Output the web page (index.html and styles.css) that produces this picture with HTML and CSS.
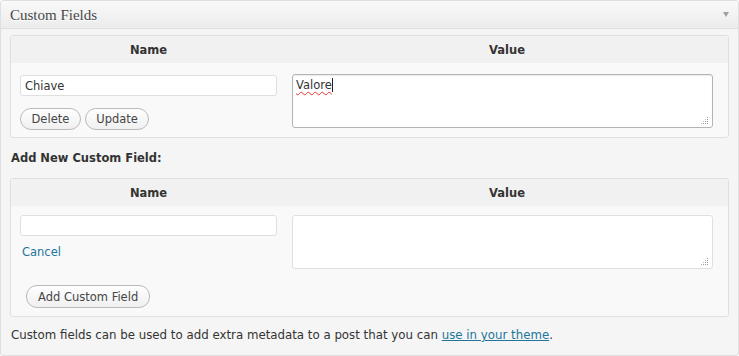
FILE: index.html
```html
<!DOCTYPE html>
<html lang="en">
<head>
    <meta charset="UTF-8">
    <title>Custom Fields</title>
    <link rel="stylesheet" href="styles.css">
</head>
<body>

    <!-- Custom fields meta box -->
    <div class="postbox">
        <div class="postbox-head">
            <h3>Custom Fields</h3>
            <span class="toggle"></span>
        </div>

        <div class="inside">
            <!-- Existing fields -->
            <table class="meta-table">
                <thead>
                    <tr>
                        <th class="col-name">Name</th>
                        <th class="col-value">Value</th>
                    </tr>
                </thead>
                <tbody>
                    <tr>
                        <td class="cell-name">
                            <input type="text" class="field-input" value="Chiave">
                            <div class="button-row">
                                <button class="btn">Delete</button>
                                <button class="btn">Update</button>
                            </div>
                        </td>
                        <td class="cell-value">
                            <div class="textbox focused">
                                <span class="typo">Valore</span><span class="caret"></span>
                                <svg class="grip" width="8" height="8" viewBox="0 0 8 8">
                                    <rect x="6" y="0" width="1" height="1" fill="#999"/>
                                    <rect x="6" y="2" width="1" height="1" fill="#999"/>
                                    <rect x="4" y="2" width="1" height="1" fill="#bbb"/>
                                    <rect x="6" y="4" width="1" height="1" fill="#999"/>
                                    <rect x="4" y="4" width="1" height="1" fill="#999"/>
                                    <rect x="2" y="4" width="1" height="1" fill="#bbb"/>
                                    <rect x="6" y="6" width="1" height="1" fill="#999"/>
                                    <rect x="4" y="6" width="1" height="1" fill="#999"/>
                                    <rect x="2" y="6" width="1" height="1" fill="#999"/>
                                    <rect x="0" y="6" width="1" height="1" fill="#bbb"/>
                                </svg>
                            </div>
                        </td>
                    </tr>
                </tbody>
            </table>

            <p class="add-title">Add New Custom Field:</p>

            <!-- New field form -->
            <table class="meta-table new-field">
                <thead>
                    <tr>
                        <th class="col-name">Name</th>
                        <th class="col-value">Value</th>
                    </tr>
                </thead>
                <tbody>
                    <tr>
                        <td class="cell-name">
                            <input type="text" class="field-input">
                            <a href="#" class="cancel-link">Cancel</a>
                        </td>
                        <td class="cell-value">
                            <div class="textbox">
                                <svg class="grip" width="8" height="8" viewBox="0 0 8 8">
                                    <rect x="6" y="0" width="1" height="1" fill="#999"/>
                                    <rect x="6" y="2" width="1" height="1" fill="#999"/>
                                    <rect x="4" y="2" width="1" height="1" fill="#bbb"/>
                                    <rect x="6" y="4" width="1" height="1" fill="#999"/>
                                    <rect x="4" y="4" width="1" height="1" fill="#999"/>
                                    <rect x="2" y="4" width="1" height="1" fill="#bbb"/>
                                    <rect x="6" y="6" width="1" height="1" fill="#999"/>
                                    <rect x="4" y="6" width="1" height="1" fill="#999"/>
                                    <rect x="2" y="6" width="1" height="1" fill="#999"/>
                                    <rect x="0" y="6" width="1" height="1" fill="#bbb"/>
                                </svg>
                            </div>
                        </td>
                    </tr>
                    <tr>
                        <td colspan="2" class="cell-submit">
                            <button class="btn">Add Custom Field</button>
                        </td>
                    </tr>
                </tbody>
            </table>

            <p class="note">Custom fields can be used to add extra metadata to a post that you can <a href="#">use in your theme</a>.</p>
        </div>
    </div>

</body>
</html>
```

FILE: styles.css
```css
/* Page */
body {
    margin: 0;
    font-family: "DejaVu Sans", sans-serif;
    font-size: 11.5px;
    color: #333;
    background: #fff;
}

/* Meta box frame */
.postbox {
    width: 737px;
    height: 354px;
    border: 1px solid #dfdfdf;
    border-radius: 3px;
    background-color: #f5f5f5;
    overflow: hidden;
}

/* Box header */
.postbox-head {
    height: 27px;
    border-bottom: 1px solid #dfdfdf;
    background: linear-gradient(#f9f9f9, #ececec);
    display: flex;
    align-items: center;
    justify-content: space-between;
    padding: 0 9px 0 9px;
}
.postbox-head h3 {
    margin: 0;
    font-family: "Liberation Serif", serif;
    font-weight: normal;
    font-size: 15px;
    color: #464646;
    text-shadow: 0 1px 0 #fff;
    position: relative;
    top: 1px;
}
.toggle {
    width: 0;
    height: 0;
    border-left: 3.5px solid transparent;
    border-right: 3.5px solid transparent;
    border-top: 5px solid #a0a0a0;
}

/* Box content */
.inside {
    padding: 6px 9px 0 9px;
}

/* Field tables */
.meta-table {
    width: 719px;
    border: 1px solid #dfdfdf;
    border-radius: 3px;
    border-spacing: 0;
    background-color: #f9f9f9;
}
.meta-table th {
    height: 27px;
    padding: 0;
    background-color: #f1f1f1;
    font-size: 11.5px;
    font-weight: bold;
    color: #333;
    text-align: center;
}
.col-name {
    width: 275px;
}
.meta-table td {
    vertical-align: top;
    padding: 0;
}
.cell-name {
    padding: 12px 9px 7px 9px !important;
}
.cell-value {
    padding: 11px 15px 0 6px !important;
}
.new-field .cell-name {
    padding: 9px 9px 0 9px !important;
}
.new-field .cell-value {
    padding: 9px 15px 0 6px !important;
}
.cell-submit {
    padding: 16px 0 8px 15px !important;
}

/* Text inputs */
.field-input {
    display: block;
    box-sizing: border-box;
    width: 257px;
    height: 21px;
    margin: 0;
    padding: 0 4px;
    border: 1px solid #dfdfdf;
    border-radius: 3px;
    background: #fff;
    font-family: "DejaVu Sans", sans-serif;
    font-size: 11.5px;
    color: #333;
    outline: none;
}

/* Textarea look-alike */
.textbox {
    position: relative;
    box-sizing: border-box;
    width: 421px;
    height: 54px;
    border: 1px solid #dfdfdf;
    border-radius: 3px;
    background: #fff;
    padding: 3px 3px;
    line-height: 15px;
    color: #333;
}
.textbox.focused {
    border-color: #b4b4b4;
    box-shadow: inset 0 1px 1px rgba(0, 0, 0, 0.08);
}
.typo {
    text-decoration: underline wavy #e33;
    text-decoration-thickness: 1px;
    text-underline-offset: 2px;
}
.caret {
    display: inline-block;
    width: 1px;
    height: 14px;
    background: #222;
    vertical-align: -3px;
}
.grip {
    position: absolute;
    right: 3px;
    bottom: 2px;
}

/* Buttons */
.button-row {
    display: flex;
    gap: 4px;
    margin-top: 12px;
}
.btn {
    height: 22px;
    padding: 0 10.5px;
    border: 1px solid #bbb;
    border-radius: 11px;
    background: linear-gradient(#fefefe, #f0f0f0);
    font-family: "DejaVu Sans", sans-serif;
    font-size: 11.5px;
    color: #464646;
    cursor: pointer;
}
.cell-submit .btn {
    height: 23px;
    padding: 0 11px;
}

/* Links */
a {
    color: #21759b;
}
.cancel-link {
    display: block;
    margin-top: 9px;
    margin-left: 2px;
    text-decoration: none;
}

/* Section title and footer note */
.add-title {
    margin: 13px 0 13px 1px;
    font-size: 11.5px;
    font-weight: bold;
    color: #333;
}
.note {
    margin: 11px 0 0 1px;
    font-size: 11.8px;
}
```
